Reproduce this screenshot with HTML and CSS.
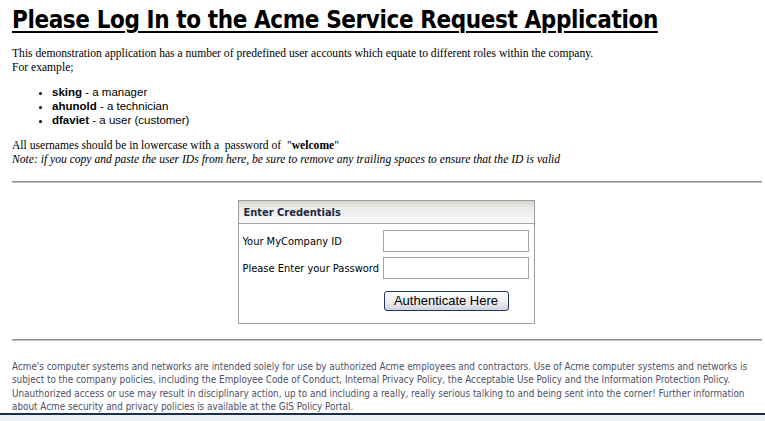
FILE: index.html
```html
<!DOCTYPE html>
<html>
<head>
<meta charset="utf-8">
<link rel="stylesheet" href="styles.css">
</head>
<body>
<div class="page">
  <h1 class="title">Please Log In to the Acme Service Request Application</h1>
  <p class="intro">This demonstration application has a number of predefined user accounts which equate to different roles within the company.<br>For example;</p>
  <ul class="users">
    <li><b>sking</b> - a manager</li>
    <li><b>ahunold</b> - a technician</li>
    <li><b>dfaviet</b> - a user (customer)</li>
  </ul>
  <p class="note">All usernames should be in lowercase with a &nbsp;password of &nbsp;"<b>welcome</b>"<br><i>Note: if you copy and paste the user IDs from here, be sure to remove any trailing spaces to ensure that the ID is valid</i></p>
  <div class="rule"></div>
  <div class="panel-wrap">
    <div class="panel">
      <div class="panel-head">Enter Credentials</div>
      <div class="panel-body">
        <div class="row"><label class="lbl">Your MyCompany ID</label><input class="field" type="text"></div>
        <div class="row"><label class="lbl">Please Enter your Password</label><input class="field" type="password"></div>
        <div class="row row-btn"><span class="lbl"></span><button class="btn">Authenticate Here</button></div>
      </div>
    </div>
  </div>
  <div class="rule rule2"></div>
  <p class="legal">Acme's computer systems and networks are intended solely for use by authorized Acme employees and contractors. Use of Acme computer systems and networks is subject to the company policies, including the Employee Code of Conduct, Internal Privacy Policy, the Acceptable Use Policy and the Information Protection Policy. Unauthorized access or use may result in disciplinary action, up to and including a really, really serious talking to and being sent into the corner! Further information about Acme security and privacy policies is available at the GIS Policy Portal.</p>
</div>
<div class="bottom"></div>
</body>
</html>
```
FILE: styles.css
```css
html, body { margin: 0; padding: 0; background: #fff; }
.page { padding: 0 3px 0 12px; }
.title {
  font-family: "DejaVu Sans Condensed", "DejaVu Sans", Tahoma, sans-serif;
  font-weight: bold;
  font-size: 24px;
  letter-spacing: -0.4px;
  text-decoration: underline;
  text-decoration-thickness: 2px;
  text-underline-offset: 3px;
  color: #000;
  margin: 0;
  padding-top: 5px;
  line-height: 30px;
}
.intro, .note {
  font-family: "Liberation Serif", "Times New Roman", serif;
  font-size: 11.6px;
  line-height: 14px;
  margin: 12px 0 0 0;
  color: #000;
}
.users {
  font-family: "Liberation Sans", Arial, sans-serif;
  font-size: 11.5px;
  line-height: 14px;
  margin: 10px 0 0 0;
  padding-left: 40px;
  color: #000;
}
.note { margin-top: 12px; }
.rule {
  margin-top: 14px;
  border-top: 1px solid #8e8e8e;
  border-bottom: 1px solid #c4c4c4;
}
.panel-wrap { display: flex; justify-content: center; margin-top: 17px; }
.panel {
  width: 295px;
  border: 1px solid #9c9c9c;
  margin-left: -2px;
}
.panel-head {
  font-family: "DejaVu Sans Condensed", "DejaVu Sans", Tahoma, sans-serif;
  font-weight: bold;
  font-size: 11px;
  color: #1d2946;
  height: 22px;
  line-height: 23px;
  padding-left: 5px;
  background: linear-gradient(#d6d6d0, #ebebe8 35%, #faf7fa);
  border-bottom: 1px solid #a4a4a4;
}
.panel-body { padding: 6px 4px 12px 4px; }
.row { display: flex; align-items: center; height: 22px; margin-bottom: 5px; }
.lbl {
  font-family: "DejaVu Sans Condensed", "DejaVu Sans", Tahoma, sans-serif;
  font-size: 11px;
  color: #000;
  width: 140px;
  flex: none;
}
.field {
  width: 146px;
  height: 22px;
  box-sizing: border-box;
  border: 1px solid #9ba7b3;
  margin: 0;
  padding: 0 2px;
  background: #fff;
}
.row-btn { margin-top: 12px; margin-bottom: 0; height: 20px; }
.btn {
  font-family: "Liberation Sans", Arial, sans-serif;
  font-size: 13px;
  color: #000;
  height: 20px;
  width: 125px;
  padding: 0;
  margin-left: 1px;
  border: 1px solid #1f3668;
  border-radius: 3px;
  background: linear-gradient(#ffffff, #f2f2f4 45%, #d2d2dc);
  line-height: 18px;
}
.rule2 { margin-top: 15px; }
.legal {
  font-family: "DejaVu Sans Condensed", "DejaVu Sans", Tahoma, sans-serif;
  font-size: 9.85px;
  line-height: 13.3px;
  color: #4f4f68;
  margin: 19px 0 0 0;
}
.bottom {
  height: 2px;
  background: #1a3050;
  border-bottom: 7px solid #eef2f7;
}
```
